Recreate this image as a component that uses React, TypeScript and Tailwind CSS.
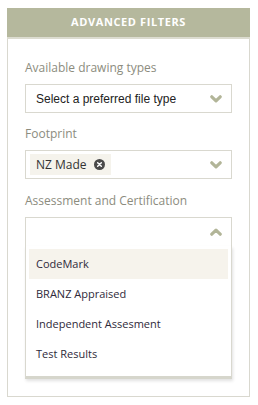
import React from 'react'

const Chevron = ({ up = false }: { up?: boolean }) => (
  <svg viewBox="0 0 12 8" className={`w-[12px] h-[8px] ${up ? 'rotate-180' : ''}`}>
    <path d="M1.8 1.8 L6 5.8 L10.2 1.8" fill="none" stroke="#b2b598" strokeWidth="3.2" strokeLinecap="round" strokeLinejoin="round" />
  </svg>
)

const ClearIcon = () => (
  <svg viewBox="0 0 12 12" className="w-[11px] h-[11px]">
    <circle cx="6" cy="6" r="6" fill="#4a4a4a" />
    <path d="M4 4 L8 8 M8 4 L4 8" stroke="#fff" strokeWidth="1.6" strokeLinecap="round" />
  </svg>
)

const Label = ({ children }: { children: React.ReactNode }) => (
  <div className="text-[12px] text-[#8c8c7e] leading-none mb-[10px]">{children}</div>
)

const options = ['CodeMark', 'BRANZ Appraised', 'Independent Assesment', 'Test Results']

export default function App() {
  return (
    <div className="w-[258px] h-[405px] bg-white pt-[8px] px-[7px]" style={{ fontFamily: '"Open Sans", sans-serif' }}>
      <div className="w-[243px] h-[389px] border border-t-0 border-[#d9d8cf] flex flex-col">
        <div className="h-[31px] -mx-px bg-[#b5b89d] border-b-2 border-[#dcdcd0] flex items-center justify-center text-white font-bold text-[11px] tracking-[0.6px]">
          ADVANCED FILTERS
        </div>
        <div className="px-[17px] pt-[23px]">
          <Label>Available drawing types</Label>
          <div className="h-[29px] border border-[#d9d8cf] flex items-center justify-between pl-[10px] pr-[9px]">
            <span className="text-[12px] text-[#222]" style={{ fontFamily: '"Liberation Sans", Arial, sans-serif' }}>
              Select a preferred file type
            </span>
            <Chevron />
          </div>

          <div className="mt-[15px]">
            <Label>Footprint</Label>
            <div className="h-[29px] border border-[#d9d8cf] flex items-center justify-between pl-[4px] pr-[9px]">
              <span className="flex items-center gap-[7px] bg-[#f5f3ec] h-[21px] px-[6px] text-[12px] text-[#333]">
                NZ Made
                <ClearIcon />
              </span>
              <Chevron />
            </div>
          </div>

          <div className="mt-[16px]">
            <Label>Assessment and Certification</Label>
            <div className="relative">
              <div className="h-[29px] border border-[#d9d8cf] border-b-0 flex items-center justify-end pr-[9px]">
                <Chevron up />
              </div>
              <div className="border border-t-0 border-[#d9d8cf] border-b-[3px] border-b-[#d6d6cc] shadow-[1px_2px_3px_rgba(0,0,0,0.12)] px-[3px] pt-[3px] pb-[7px]">
                {options.map((o, i) => (
                  <div
                    key={o}
                    className={`h-[30px] flex items-center px-[7px] text-[11px] text-[#2f2a3a] ${i === 0 ? 'bg-[#f6f3ec]' : ''}`}
                  >
                    {o}
                  </div>
                ))}
              </div>
            </div>
          </div>
        </div>
      </div>
    </div>
  )
}
